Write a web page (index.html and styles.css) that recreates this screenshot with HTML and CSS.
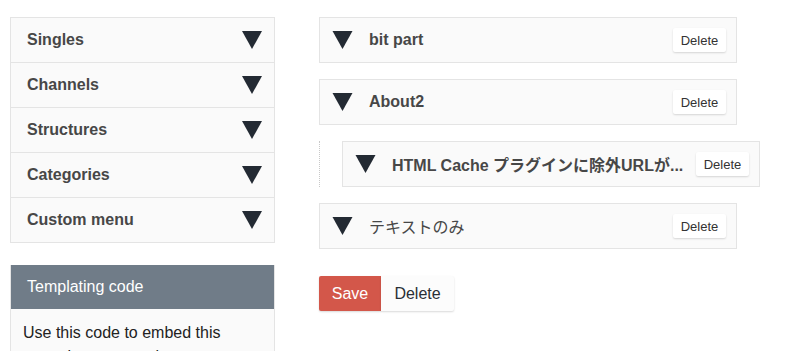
FILE: index.html
```html
<!DOCTYPE html>
<html lang="en">
<head>
    <meta charset="UTF-8">
    <title>Menu editor</title>
    <link rel="stylesheet" href="styles.css">
</head>
<body>
    <div class="page">
        <aside class="sidebar">
            <ul class="source-list">
                <li class="source-row"><span>Singles</span><svg class="caret" viewBox="0 0 20 18"><polygon points="0,0 20,0 10,18"/></svg></li>
                <li class="source-row"><span>Channels</span><svg class="caret" viewBox="0 0 20 18"><polygon points="0,0 20,0 10,18"/></svg></li>
                <li class="source-row"><span>Structures</span><svg class="caret" viewBox="0 0 20 18"><polygon points="0,0 20,0 10,18"/></svg></li>
                <li class="source-row"><span>Categories</span><svg class="caret" viewBox="0 0 20 18"><polygon points="0,0 20,0 10,18"/></svg></li>
                <li class="source-row"><span>Custom menu</span><svg class="caret" viewBox="0 0 20 18"><polygon points="0,0 20,0 10,18"/></svg></li>
            </ul>
            <div class="code-panel">
                <div class="code-header">Templating code</div>
                <div class="code-body">Use this code to embed this menu in your templates:</div>
            </div>
        </aside>

        <main class="menu">
            <div class="menu-item">
                <svg class="caret" viewBox="0 0 20 18"><polygon points="0,0 20,0 10,18"/></svg>
                <span class="item-title">bit part</span>
                <button class="btn-small">Delete</button>
            </div>
            <div class="menu-item">
                <svg class="caret" viewBox="0 0 20 18"><polygon points="0,0 20,0 10,18"/></svg>
                <span class="item-title">About2</span>
                <button class="btn-small">Delete</button>
            </div>
            <div class="children">
                <div class="menu-item">
                    <svg class="caret" viewBox="0 0 20 18"><polygon points="0,0 20,0 10,18"/></svg>
                    <span class="item-title">HTML Cache プラグインに除外URLが...</span>
                    <button class="btn-small">Delete</button>
                </div>
            </div>
            <div class="menu-item">
                <svg class="caret" viewBox="0 0 20 18"><polygon points="0,0 20,0 10,18"/></svg>
                <span class="item-title plain">テキストのみ</span>
                <button class="btn-small">Delete</button>
            </div>
            <div class="actions">
                <button class="btn-save">Save</button>
                <button class="btn-delete">Delete</button>
            </div>
        </main>
    </div>
</body>
</html>
```

FILE: styles.css
```css
body {
    margin: 0;
    font-family: "Liberation Sans", "Noto Sans CJK JP", Arial, sans-serif;
    color: #222;
    background: #fff;
}
.page {
    display: flex;
    gap: 44px;
    padding: 17px 10px;
}
.sidebar {
    width: 265px;
    flex-shrink: 0;
}
.source-list {
    list-style: none;
    margin: 0;
    padding: 0;
    border: 1px solid #e4e4e4;
    background: #fafafa;
}
.source-row {
    display: flex;
    align-items: center;
    justify-content: space-between;
    height: 44px;
    padding: 0 12px 0 16px;
    font-size: 16px;
    font-weight: bold;
    color: #474747;
}
.source-row + .source-row {
    border-top: 1px solid #e4e4e4;
}
.caret {
    width: 20px;
    height: 18px;
    fill: #232a33;
    flex-shrink: 0;
}
.code-panel {
    margin-top: 22px;
    border: 1px solid #e4e4e4;
    border-top: none;
}
.code-header {
    height: 44px;
    line-height: 44px;
    padding-left: 16px;
    background: #707c88;
    color: #fff;
    font-size: 16px;
}
.code-body {
    padding: 12px 12px;
    background: #fafafa;
    font-size: 16px;
    line-height: 24px;
}
.menu {
    width: 418px;
    display: flex;
    flex-direction: column;
    gap: 16px;
}
.menu-item {
    display: flex;
    align-items: center;
    height: 44px;
    padding: 0 10px 0 12px;
    border: 1px solid #e4e4e4;
    background: #fafafa;
}
.menu-item .caret {
    width: 21px;
}
.item-title {
    flex: 1;
    margin-left: 16px;
    font-size: 16px;
    font-weight: bold;
    color: #474747;
    white-space: nowrap;
}
.item-title.plain {
    font-weight: normal;
}
.btn-small {
    width: 53px;
    height: 24px;
    padding: 0;
    border: none;
    border-radius: 2px;
    background: #fff;
    box-shadow: 0 1px 2px rgba(0, 0, 0, 0.15);
    font-family: inherit;
    font-size: 13px;
    color: #333;
}
.children {
    width: 418px;
    padding-left: 22px;
    border-left: 1px dotted #c8c8c8;
}
.actions {
    display: flex;
    margin-top: 11px;
}
.btn-save,
.btn-delete {
    height: 35px;
    border: none;
    font-family: inherit;
    font-size: 16px;
    box-shadow: 0 1px 2px rgba(0, 0, 0, 0.15);
}
.btn-save {
    width: 62px;
    background: #d3574a;
    color: #fff;
    border-radius: 2px 0 0 2px;
}
.btn-delete {
    width: 73px;
    background: #fcfcfc;
    color: #2a2f36;
    border-radius: 0 2px 2px 0;
}
```
